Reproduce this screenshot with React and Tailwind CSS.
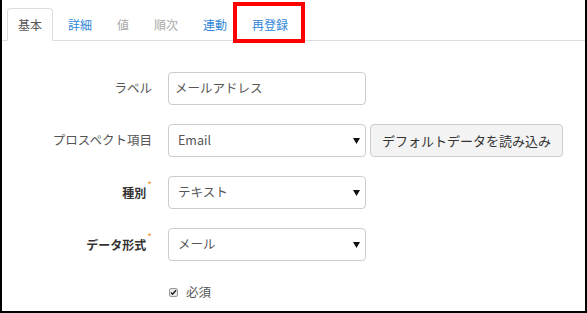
import React from 'react';

const jp = { fontFamily: '"Noto Sans CJK JP", "Open Sans", sans-serif' };

const tabs = [
  { label: '基本', state: 'active' },
  { label: '詳細', state: 'link' },
  { label: '値', state: 'disabled' },
  { label: '順次', state: 'disabled' },
  { label: '連動', state: 'link' },
  { label: '再登録', state: 'link', marked: true },
];

function Caret() {
  return (
    <svg width="7" height="6" viewBox="0 0 7 6" className="shrink-0">
      <path d="M0 0h7L3.5 6z" fill="#111" />
    </svg>
  );
}

function Select({ value }) {
  return (
    <div className="flex h-[33px] w-[198px] items-center justify-between rounded border border-[#cccccc] bg-white pl-[9px] pr-[5px] text-[12.5px] text-[#555]">
      <span>{value}</span>
      <Caret />
    </div>
  );
}

function Row({ label, required, children }) {
  return (
    <div className="flex items-center">
      <div className="flex w-[166px] justify-end pr-[16px]">
        <span className={required ? 'font-bold text-[#333]' : 'text-[12.5px] text-[#555]'}>{label}</span>
        {required && <span className="-mt-[4px] ml-[1px] text-[10px] leading-none text-[#f0932b]">*</span>}
      </div>
      {children}
    </div>
  );
}

export default function App() {
  return (
    <div className="h-[313px] w-[587px] overflow-hidden bg-white text-[12px]" style={jp}>
      <div className="h-full border-b-2 border-l-2 border-r-2 border-black">
        <div className="flex gap-[5px] border-b border-[#dddddd] pl-[5px] pt-[8px]">
          {tabs.map((t) =>
            <div
              key={t.label}
              className={
                'relative -mb-px flex h-[33px] items-center px-[10px] ' +
                (t.state === 'active'
                  ? 'rounded-t border border-[#dddddd] border-b-white bg-white px-[9px] text-[#555]'
                  : t.state === 'disabled'
                  ? 'text-[#aaaaaa]'
                  : 'text-[#2f86d8]')
              }
            >
              {t.label}
              {t.marked && <div className="absolute -left-[9px] -right-[7px] -top-[6px] bottom-[-2px] border-[4px] border-[#ff0000]" />}
            </div>
          )}
        </div>

        <div className="flex flex-col gap-[19px] pt-[31px]">
          <Row label="ラベル">
            <div className="flex h-[33px] w-[198px] items-center rounded border border-[#cccccc] bg-white px-[6px] text-[12.5px] text-[#555]">
              メールアドレス
            </div>
          </Row>
          <Row label="プロスペクト項目">
            <Select value="Email" />
            <button className="ml-[4px] h-[33px] rounded border border-[#cccccc] bg-[#f3f3f3] px-[11px] text-[13px] text-[#333]">
              デフォルトデータを読み込み
            </button>
          </Row>
          <Row label="種別" required>
            <Select value="テキスト" />
          </Row>
          <Row label="データ形式" required>
            <Select value="メール" />
          </Row>
          <div className="flex items-center pl-[167px] pt-[3px] text-[#555]">
            <span className="flex h-[9px] w-[9px] items-center justify-center rounded-[2px] border border-[#999] bg-[#e8e8e8]">
              <svg width="7" height="7" viewBox="0 0 7 7">
                <path d="M1 3.6l1.6 1.7L6 1.3" stroke="#222" strokeWidth="1.4" fill="none" />
              </svg>
            </span>
            <span className="ml-[8px] text-[12.5px]">必須</span>
          </div>
        </div>
      </div>
    </div>
  );
}
